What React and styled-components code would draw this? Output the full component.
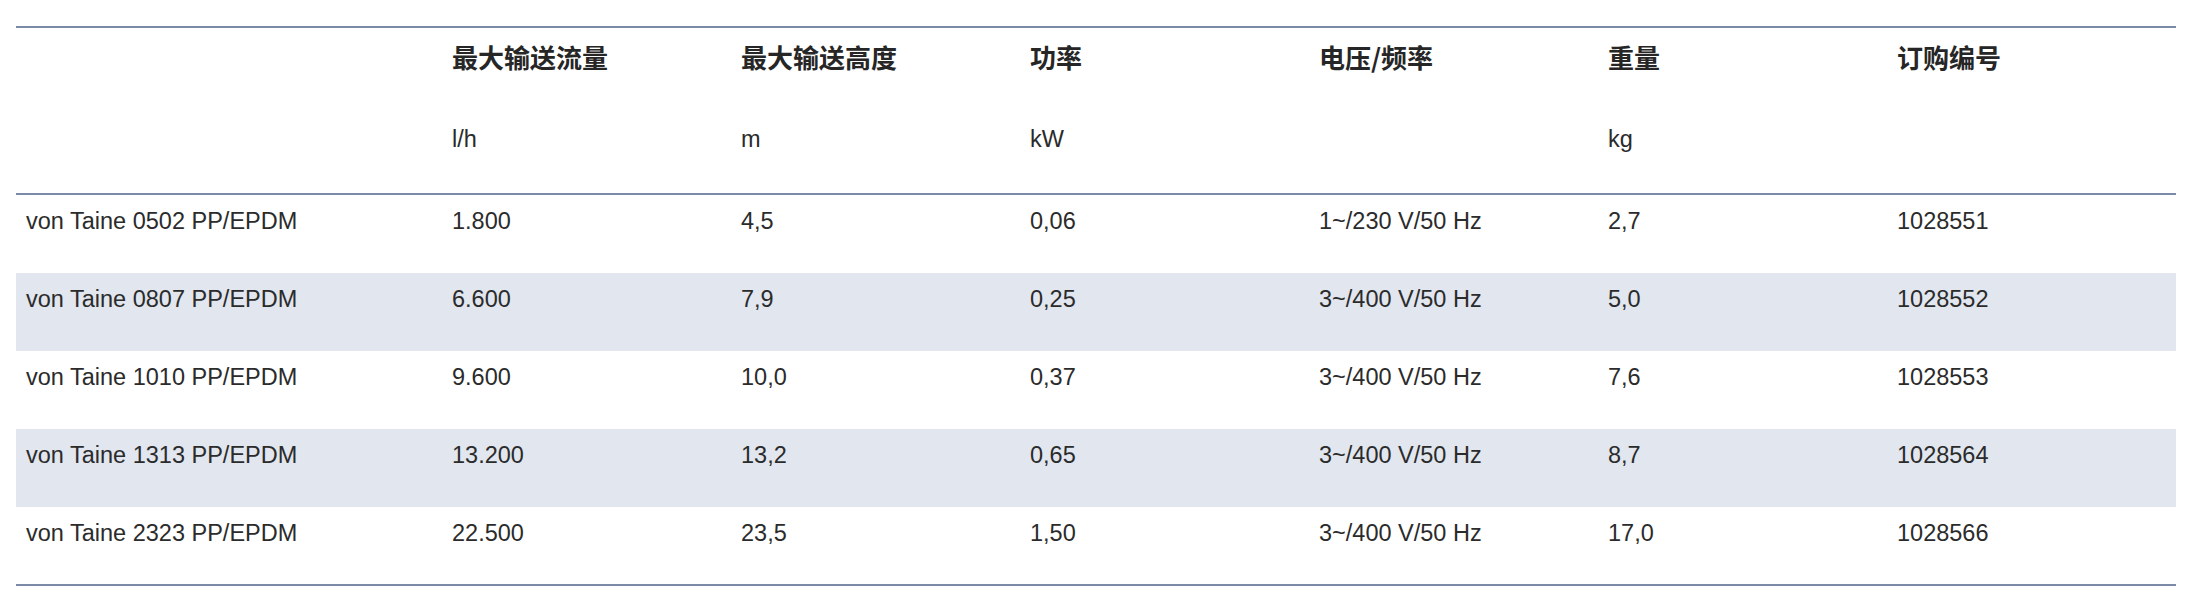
import React from 'react';
import styled, { createGlobalStyle } from 'styled-components';

const GlobalStyle = createGlobalStyle`
    *, *::before, *::after {
        box-sizing: border-box;
    }
    body {
        margin: 0;
        background: #ffffff;
        font-family: "Liberation Sans", Arial, "Noto Sans CJK SC", sans-serif;
        color: #2b2b2b;
    }
`;

const Wrapper = styled.div`
    padding: 26px 19px 0 16px;
`;

const Table = styled.table`
    width: 2160px;
    table-layout: fixed;
    border-collapse: separate;
    border-spacing: 0;
`;

const LabelCell = styled.th`
    width: ${({ first }) => (first ? '426px' : 'auto')};
    padding: 11px 10px 35px 10px;
    line-height: 36px;
    border-top: 2px solid #7b8aa6;
    text-align: left;
    vertical-align: top;
    font-family: "Noto Sans CJK SC", "Liberation Sans", sans-serif;
    font-size: 26px;
    font-weight: 700;
    color: #262626;
`;

const UnitCell = styled.th`
    padding: 13px 10px 38px 10px;
    line-height: 32px;
    border-bottom: 2px solid #7b8aa6;
    text-align: left;
    vertical-align: top;
    font-size: 23.5px;
    font-weight: 400;
    color: #2b2b2b;
`;

const Row = styled.tr`
    background: ${({ striped }) => (striped ? '#e1e6ef' : 'transparent')};
`;

const Cell = styled.td`
    padding: 10px 10px ${({ last }) => (last ? '35px' : '36px')} 10px;
    line-height: 32px;
    font-size: 23.5px;
    vertical-align: top;
    white-space: nowrap;
    border-bottom: ${({ last }) => (last ? '2px solid #7b8aa6' : 'none')};
`;

const columns = [
    { label: '', unit: '' },
    { label: '最大输送流量', unit: 'l/h' },
    { label: '最大输送高度', unit: 'm' },
    { label: '功率', unit: 'kW' },
    { label: '电压/频率', unit: '' },
    { label: '重量', unit: 'kg' },
    { label: '订购编号', unit: '' },
];

const rows = [
    ['von Taine 0502 PP/EPDM', '1.800', '4,5', '0,06', '1~/230 V/50 Hz', '2,7', '1028551'],
    ['von Taine 0807 PP/EPDM', '6.600', '7,9', '0,25', '3~/400 V/50 Hz', '5,0', '1028552'],
    ['von Taine 1010 PP/EPDM', '9.600', '10,0', '0,37', '3~/400 V/50 Hz', '7,6', '1028553'],
    ['von Taine 1313 PP/EPDM', '13.200', '13,2', '0,65', '3~/400 V/50 Hz', '8,7', '1028564'],
    ['von Taine 2323 PP/EPDM', '22.500', '23,5', '1,50', '3~/400 V/50 Hz', '17,0', '1028566'],
];

const App = () => (
    <>
        <GlobalStyle />
        <Wrapper>
            <Table>
                <thead>
                    <tr>
                        {columns.map((col, i) => (
                            <LabelCell key={i} first={i === 0}>
                                {col.label}
                            </LabelCell>
                        ))}
                    </tr>
                    <tr>
                        {columns.map((col, i) => (
                            <UnitCell key={i}>{col.unit}</UnitCell>
                        ))}
                    </tr>
                </thead>
                <tbody>
                    {rows.map((row, r) => (
                        <Row key={r} striped={r % 2 === 1}>
                            {row.map((value, c) => (
                                <Cell key={c} last={r === rows.length - 1}>
                                    {value}
                                </Cell>
                            ))}
                        </Row>
                    ))}
                </tbody>
            </Table>
        </Wrapper>
    </>
);

export default App;
